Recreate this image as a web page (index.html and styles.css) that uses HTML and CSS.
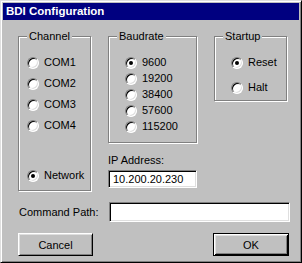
FILE: index.html
```html
<!DOCTYPE html>
<html>
<head>
  <title>BDI Configuration</title>
  <link rel="stylesheet" href="styles.css">
</head>
<body>
  <div class="window">
    <div class="titlebar">BDI Configuration</div>

    <div class="content">
      <div class="groups">
        <div class="group channel">
          <span class="legend">Channel</span>
          <label class="opt"><span class="radio"></span>COM1</label>
          <label class="opt"><span class="radio"></span>COM2</label>
          <label class="opt"><span class="radio"></span>COM3</label>
          <label class="opt"><span class="radio"></span>COM4</label>
          <label class="opt network"><span class="radio on"></span>Network</label>
        </div>

        <div class="middle">
          <div class="group baud">
            <span class="legend">Baudrate</span>
            <label class="opt"><span class="radio on"></span>9600</label>
            <label class="opt"><span class="radio"></span>19200</label>
            <label class="opt"><span class="radio"></span>38400</label>
            <label class="opt"><span class="radio"></span>57600</label>
            <label class="opt"><span class="radio"></span>115200</label>
          </div>
          <div class="ip-label">IP Address:</div>
          <div class="field ip">10.200.20.230</div>
        </div>

        <div class="group startup">
          <span class="legend">Startup</span>
          <label class="opt"><span class="radio on"></span>Reset</label>
          <label class="opt"><span class="radio"></span>Halt</label>
        </div>
      </div>

      <div class="cmd-row">
        <span class="cmd-label">Command Path:</span>
        <div class="field cmd"></div>
      </div>

      <div class="buttons">
        <button class="btn">Cancel</button>
        <button class="btn default">OK</button>
      </div>
    </div>
  </div>
</body>
</html>
```

FILE: styles.css
```css
body { margin: 0; background: #c0c0c0; font-family: "Liberation Sans", Arial, sans-serif; font-size: 11px; color: #000; }

.window { width: 302px; height: 263px; box-sizing: border-box; padding: 2px; background: #c0c0c0;
  border: 1px solid; border-color: #dfdfdf #000 #000 #dfdfdf;
  box-shadow: inset 1px 1px #fff, inset -1px -1px #808080; }

.titlebar { height: 17px; line-height: 17px; background: #000080; color: #fff; font-weight: bold; font-size: 11.5px; padding-left: 3px; }

.content { padding: 16px 0 0 15px; }

.groups { display: flex; align-items: flex-start; gap: 17px; }

.group { position: relative; box-sizing: border-box; display: flex; flex-direction: column;
  border: 1px solid #808080; box-shadow: inset 1px 1px #fff, 1px 1px #fff; padding-top: 19px; }
.legend { position: absolute; top: -7px; left: 8px; padding: 0 2px; line-height: 13px; background: #c0c0c0; }

.channel { width: 73px; height: 155px; gap: 8px; padding-left: 8px; padding-bottom: 8px; }
.channel .network { margin-top: auto; }
.baud { width: 89px; height: 107px; gap: 3px; padding-left: 16px; }
.startup { width: 73px; height: 65px; gap: 12px; padding-left: 16px; }

.opt { display: flex; align-items: center; gap: 5px; height: 13px; line-height: 13px; }

.radio { position: relative; width: 12px; height: 12px; box-sizing: border-box; border-radius: 50%; background: #fff;
  border: 1px solid; border-color: #808080 #fff #fff #808080;
  box-shadow: inset 1px 1px #000, inset -1px -1px #dfdfdf; flex: none; }
.radio.on::after { content: ""; position: absolute; left: 3px; top: 3px; width: 4px; height: 4px; border-radius: 50%; background: #000; }

.middle { display: flex; flex-direction: column; }
.ip-label { margin-top: 11px; line-height: 13px; }

.field { box-sizing: border-box; background: #fff; border: 1px solid; border-color: #808080 #fff #fff #808080;
  box-shadow: inset 1px 1px #000, inset -1px -1px #dfdfdf; padding-left: 4px; line-height: 16px; }
.ip { width: 89px; height: 18px; margin-top: 3px; }

.cmd-row { display: flex; align-items: center; margin-top: 11px; }
.cmd-label { width: 90px; padding-left: 1px; }
.cmd { width: 181px; height: 20px; }

.buttons { display: flex; justify-content: space-between; width: 271px; margin-top: 11px; }
.btn { width: 75px; height: 23px; padding: 0; font: inherit; color: #000; background: #c0c0c0;
  border: 1px solid; border-color: #fff #000 #000 #fff;
  box-shadow: inset 1px 1px #dfdfdf, inset -1px -1px #808080; }
.btn.default { width: 76px; border: 1px solid #000;
  box-shadow: inset 1px 1px #fff, inset -1px -1px #000, inset 2px 2px #dfdfdf, inset -2px -2px #808080; }
```
